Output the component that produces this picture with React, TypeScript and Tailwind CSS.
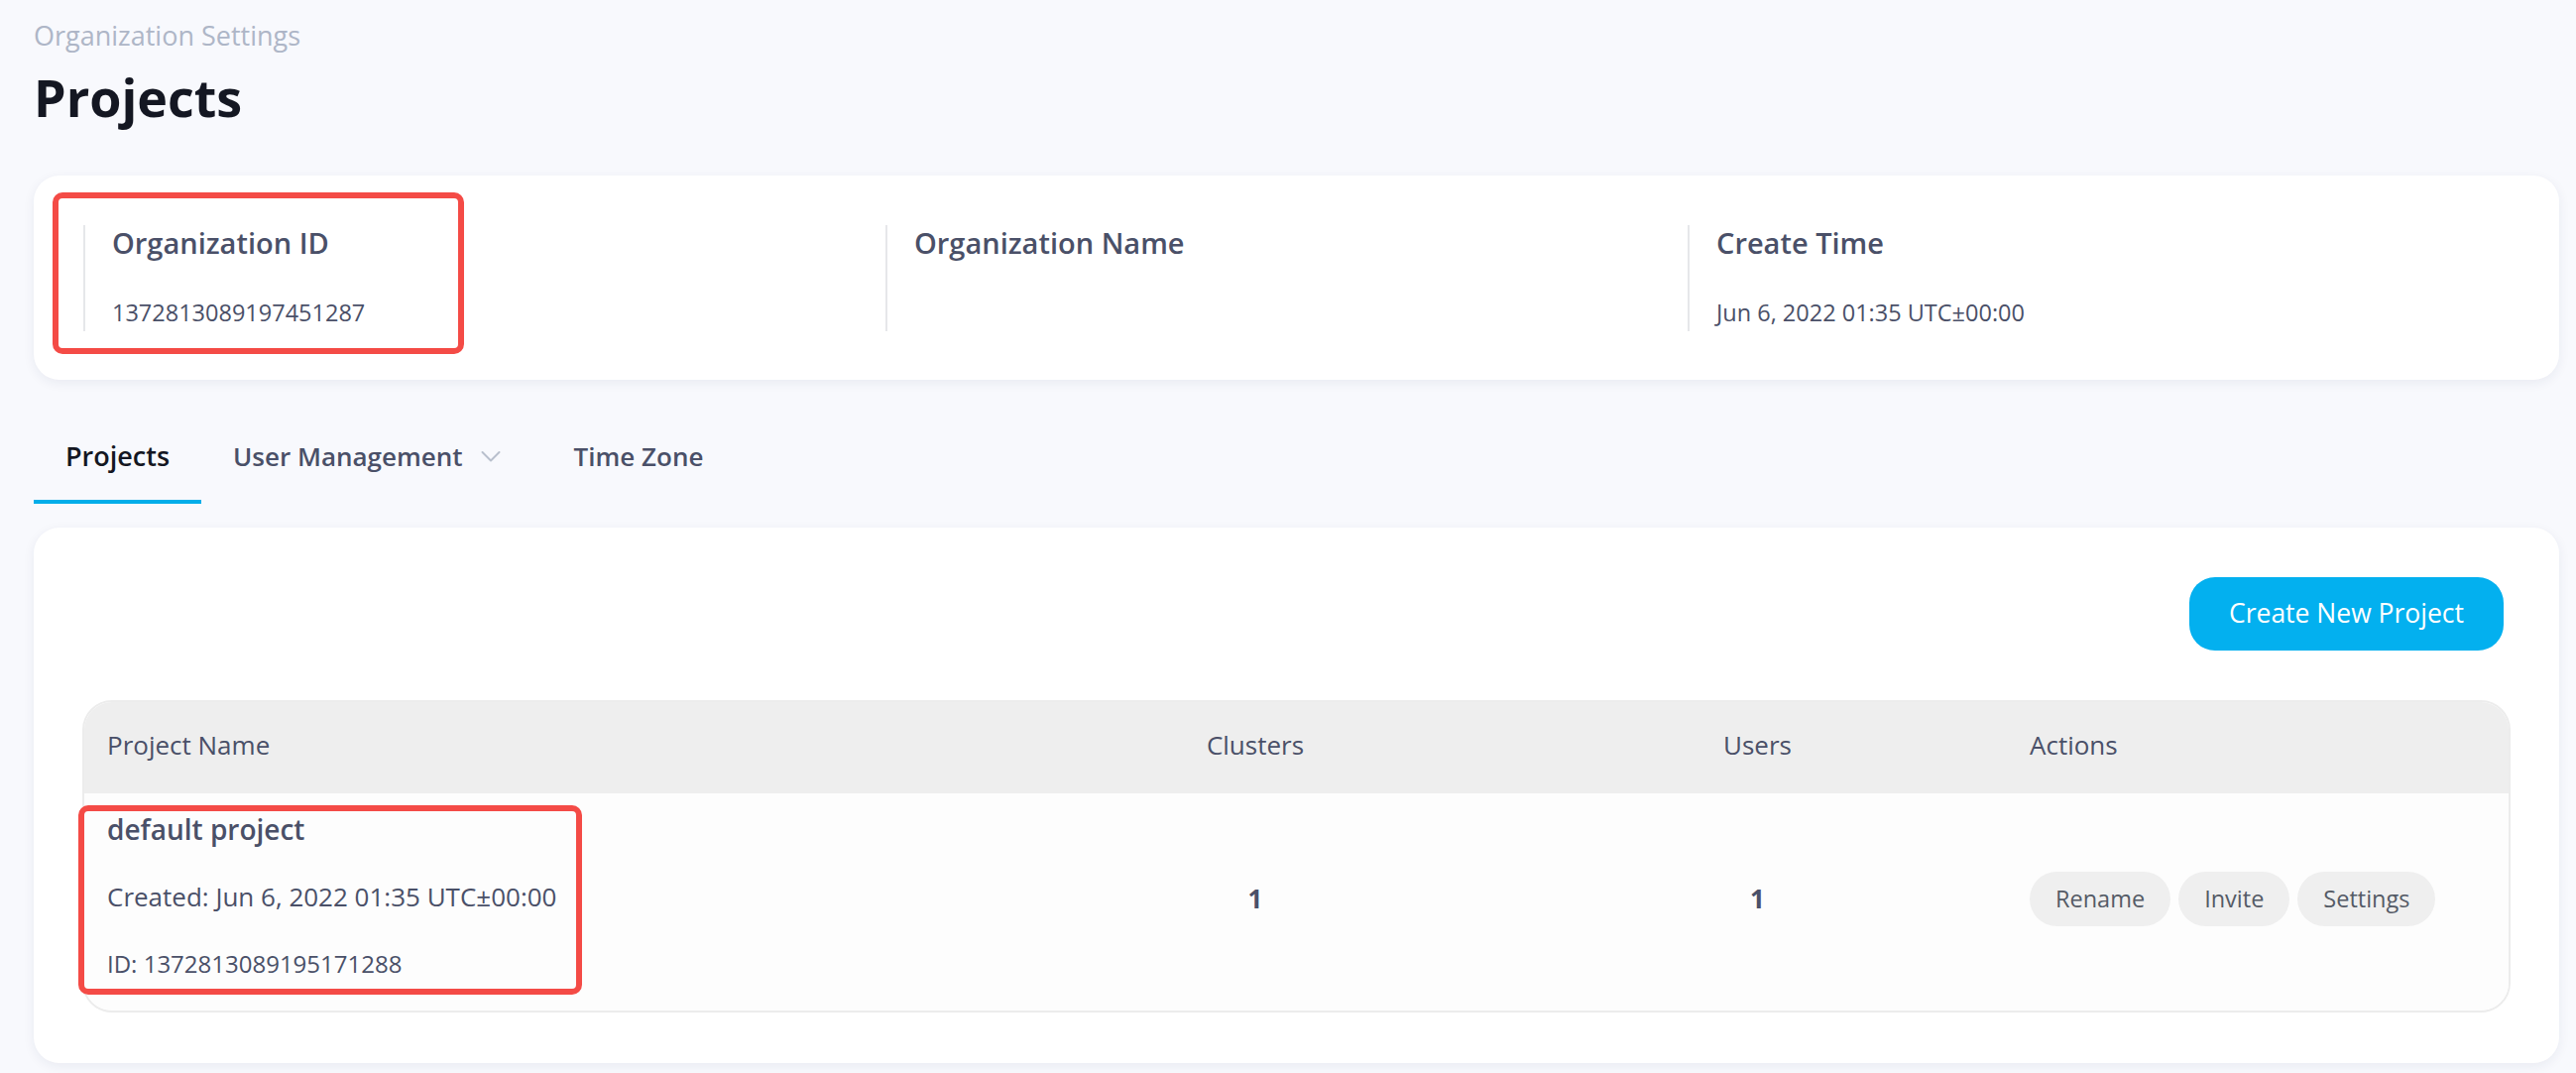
import React from 'react';

const labelColor = 'text-[#4a5068]';

const InfoColumn: React.FC<{ label: string; value?: string }> = ({ label, value }) => (
  <div className="w-[809px] h-[107px] border-l-2 border-[#e6e7ea] pl-[27px] flex flex-col">
    <div className={`text-[29px] leading-[36px] font-semibold ${labelColor}`}>{label}</div>
    <div className={`mt-[36px] text-[23.5px] leading-[32px] ${labelColor}`}>{value}</div>
  </div>
);

const ActionButton: React.FC<{ label: string }> = ({ label }) => (
  <button className="h-[55px] px-[26px] rounded-[28px] bg-[#efefef] text-[23.5px] text-[#555b66]">
    {label}
  </button>
);

const App: React.FC = () => {
  return (
    <div className="min-h-screen bg-[#f8f9fd] pl-[34px] pr-[17px] pt-[18px] pb-[14px] font-['Open_Sans',sans-serif]">
      {/* Header */}
      <div className="text-[27px] leading-[36px] text-[#aeb6c7]">Organization Settings</div>
      <h1 className="mt-[12px] text-[52px] leading-[64px] font-bold text-[#141722]">Projects</h1>

      {/* Organization info card */}
      <div className="relative mt-[47px] bg-white rounded-[26px] shadow-[0_3px_12px_rgba(30,40,80,0.07)] pl-[50px] pt-[50px] pb-[49px] flex">
        <InfoColumn label="Organization ID" value="1372813089197451287" />
        <InfoColumn label="Organization Name" />
        <InfoColumn label="Create Time" value="Jun 6, 2022 01:35 UTC±00:00" />
        <div className="absolute left-[19px] top-[17px] w-[415px] h-[163px] border-[6px] border-[#f44b46] rounded-[10px]" />
      </div>

      {/* Tabs */}
      <div className="mt-[59px] flex items-end">
        <div className="px-[32px] pb-[26px] border-b-4 border-[#03aee9] text-[27px] leading-[36px] font-semibold text-[#141722]">
          Projects
        </div>
        <div className="pl-[32px] pr-[40px] pb-[26px] border-b-4 border-transparent flex items-center">
          <span className={`text-[26px] leading-[36px] font-semibold ${labelColor}`}>User Management</span>
          <svg className="ml-[16px]" width="24" height="24" viewBox="0 0 24 24" fill="none">
            <path d="M3.5 8L12 16.5L20.5 8" stroke="#b9c0cd" strokeWidth="2" strokeLinecap="round" strokeLinejoin="round" />
          </svg>
        </div>
        <div className={`px-[32px] pb-[26px] border-b-4 border-transparent text-[26px] leading-[36px] font-semibold ${labelColor}`}>
          Time Zone
        </div>
      </div>

      {/* Projects card */}
      <div className="relative mt-[24px] bg-white rounded-[26px] shadow-[0_3px_12px_rgba(30,40,80,0.07)] px-[49px] pt-[50px] pb-[51px]">
        <div className="flex justify-end">
          <button className="mr-[7px] h-[74px] px-[40px] rounded-[26px] bg-[#03b0ef] text-white text-[26.5px]">
            Create New Project
          </button>
        </div>

        <div className="mt-[50px] border-2 border-[#ececec] rounded-[30px] overflow-hidden">
          <div className={`grid grid-cols-[928px_506px_507px_1fr] h-[92px] pb-[5px] items-center bg-[#eeeeee] text-[26px] ${labelColor}`}>
            <div className="px-[23px]">Project Name</div>
            <div className="text-center">Clusters</div>
            <div className="text-center">Users</div>
            <div className="px-[21px]">Actions</div>
          </div>
          <div className={`grid grid-cols-[928px_506px_507px_1fr] h-[219px] items-center bg-[#fdfdfd] ${labelColor}`}>
            <div className="px-[23px] pt-[1px] pb-[13px] text-[26px] leading-[68px]">
              <div className="text-[28px] font-semibold">default project</div>
              <div>Created: Jun 6, 2022 01:35 UTC±00:00</div>
              <div className="text-[24px]">ID: 1372813089195171288</div>
            </div>
            <div className="mb-[6px] text-center text-[26px] font-bold">1</div>
            <div className="mb-[6px] text-center text-[26px] font-bold">1</div>
            <div className="mb-[6px] px-[21px] flex gap-[8px]">
              <ActionButton label="Rename" />
              <ActionButton label="Invite" />
              <ActionButton label="Settings" />
            </div>
          </div>
        </div>

        <div className="absolute left-[45px] top-[280px] w-[508px] h-[191px] border-[6px] border-[#f44b46] rounded-[10px]" />
      </div>
    </div>
  );
};

export default App;
